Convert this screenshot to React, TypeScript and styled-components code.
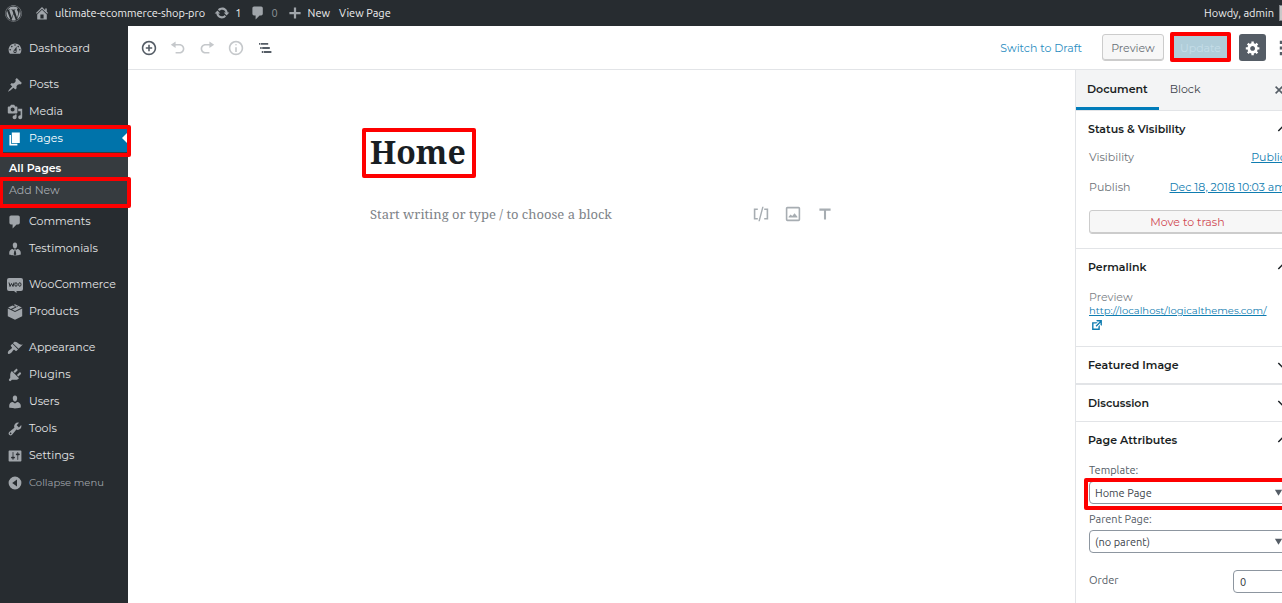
import React from "react";
import styled, { createGlobalStyle, css } from "styled-components";
import { FaWordpress } from "react-icons/fa";

const GlobalStyle = createGlobalStyle`
  *, *::before, *::after { box-sizing: border-box; }
  html, body, #root { height: 100%; }
  body { margin: 0; background: #fff; overflow: hidden; }
  button, input, select { font: inherit; margin: 0; }
`;

const ui = `"Montserrat", "Inter", "Open Sans", sans-serif`;
const system = `"Ubuntu", "Noto Sans", "Open Sans", sans-serif`;
const serif = `"Noto Serif", "DejaVu Serif Condensed", "DejaVu Serif", serif`;

/* ---------- icons ---------- */

const paths = {
  dashboard:
    "M3.76 16h12.48c1.1-1.37 1.76-3.11 1.76-5 0-4.42-3.58-8-8-8s-8 3.58-8 8c0 1.89.66 3.63 1.76 5zM10 4c.55 0 1 .45 1 1s-.45 1-1 1-1-.45-1-1 .45-1 1-1zM6 6c.55 0 1 .45 1 1s-.45 1-1 1-1-.45-1-1 .45-1 1-1zm8 0c.55 0 1 .45 1 1s-.45 1-1 1-1-.45-1-1 .45-1 1-1zm-5.37 5.55L12 7v6c0 1.1-.9 2-2 2s-2-.9-2-2c0-.57.24-1.08.63-1.45zM4 10c.55 0 1 .45 1 1s-.45 1-1 1-1-.45-1-1 .45-1 1-1zm12 0c.55 0 1 .45 1 1s-.45 1-1 1-1-.45-1-1 .45-1 1-1zm-5 3c0-.55-.45-1-1-1s-1 .45-1 1 .45 1 1 1 1-.45 1-1z",
  pin: "M10.44 3.02l1.82-1.82 6.36 6.35-1.83 1.82c-1.05-.68-2.48-.57-3.41.36l-.75.75c-.92.93-1.04 2.35-.35 3.41l-1.83 1.82-2.41-2.41-2.8 2.79c-.42.42-3.38 2.71-3.8 2.29s1.86-3.39 2.28-3.81l2.79-2.79L4.1 9.36l1.83-1.82c1.05.69 2.48.57 3.4-.36l.75-.75c.93-.92 1.05-2.35.36-3.41z",
  media:
    "M13 11V4c0-.55-.45-1-1-1h-1.67L9 1H5L3.67 3H2c-.55 0-1 .45-1 1v7c0 .55.45 1 1 1h10c.55 0 1-.45 1-1zM7 4.5c1.38 0 2.5 1.12 2.5 2.5S8.38 9.5 7 9.5 4.5 8.38 4.5 7 5.62 4.5 7 4.5zM14 6h5v10.5c0 1.38-1.12 2.5-2.5 2.5S14 17.88 14 16.5s1.12-2.5 2.5-2.5c.17 0 .34.02.5.05V9h-3V6zm-4 8.05V13h2v3.5c0 1.38-1.12 2.5-2.5 2.5S7 17.88 7 16.5 8.12 14 9.5 14c.17 0 .34.02.5.05z",
  page: "M6 15V2h10v13H6zm-1 1h8v2H3V5h2v11z",
  comment:
    "M5 2h9c1.1 0 2 .9 2 2v7c0 1.1-.9 2-2 2h-2l-5 5v-5H5c-1.1 0-2-.9-2-2V4c0-1.1.9-2 2-2z",
  businessman:
    "M10 9.25c-2.27 0-2.73-3.44-2.73-3.44C7 4.02 7.82 2 9.97 2c2.16 0 2.98 2.02 2.71 3.81 0 0-.41 3.44-2.68 3.44zM7.2 10L9.3 12l-.9 4.6L10 18l1.6-1.4-.9-4.6L12.8 10c2.4 0 4.4 2.3 4.4 4.5V17s-3.6 1.2-7.2 1.2S2.8 17 2.8 17v-2.5C2.8 12.3 4.7 10 7.2 10zM9.2 10.2h1.6l.5 1-1.3 1-1.3-1z",
  users:
    "M10 9.25c-2.27 0-2.73-3.44-2.73-3.44C7 4.02 7.82 2 9.97 2c2.16 0 2.98 2.02 2.71 3.81 0 0-.41 3.44-2.68 3.44zm0 2.57L12.72 10c2.39 0 4.52 2.33 4.52 4.53v2.49s-3.65 1.13-7.24 1.13c-3.65 0-7.24-1.13-7.24-1.13v-2.49c0-2.25 1.94-4.48 4.47-4.48z",
  products:
    "M8.200 1.100L10 .3l8.600 4.200L10 8.600 6.300 6.800 14 3.200 12.700 2.500 4.800 6.100 1.400 4.500 6.800 1.800l5 2.300 1.500-.7zM1 5.600l9 4.300 9-4.300v9.700L10 19.800 1 15.300z",
  appearance:
    "M14.48 11.06L7.41 3.99l1.5-1.5c.5-.56 2.3-.47 3.51.32 1.21.8 1.43 1.28 2.91 2.1 1.18.64 2.45 1.26 4.45.85zm-.71.71L6.7 4.7 4.93 6.47c-.39.39-.39 1.02 0 1.41l1.06 1.06c.39.39.39 1.03 0 1.42-.6.6-1.43 1.11-2.21 1.69-.35.26-.7.53-1.01.84C1.43 14.23.4 16.08 1.4 17.07c.99 1 2.84-.03 4.18-1.36.31-.31.58-.66.85-1.02.57-.78 1.08-1.61 1.69-2.21.39-.39 1.02-.39 1.41 0l1.06 1.06c.39.39 1.02.39 1.41 0z",
  plugins:
    "M13.11 4.36L9.87 7.6 8 5.73l3.24-3.24c.35-.34 1.05-.2 1.56.32.52.51.66 1.21.31 1.55zm-8 1.77l.91-1.12 9.01 9.01-1.19.84c-.71.71-2.63 1.16-3.82 1.16H6.14L4.9 17.26c-.59.59-1.54.59-2.12 0-.59-.58-.59-1.53 0-2.12l1.24-1.24v-3.88c0-1.13.4-3.19 1.09-3.89zm7.26 3.97l3.24-3.24c.34-.35 1.04-.21 1.55.31.52.51.66 1.21.31 1.55l-3.24 3.25z",
  tools:
    "M16.68 9.77c-1.34 1.34-3.3 1.67-4.95.99l-5.41 6.52c-.99.99-2.59.99-3.58 0s-.99-2.59 0-3.57l6.52-5.42c-.68-1.65-.35-3.61.99-4.95 1.28-1.28 3.12-1.62 4.72-1.06l-2.89 2.89 2.82 2.82 2.86-2.87c.53 1.58.18 3.39-1.08 4.65zM3.81 16.21c.4.39 1.04.39 1.43 0 .4-.4.4-1.04 0-1.43-.39-.4-1.03-.4-1.43 0-.39.39-.39 1.03 0 1.43z",
  settings:
    "M18 16V4c0-.55-.45-1-1-1H3c-.55 0-1 .45-1 1v12c0 .55.45 1 1 1h14c.55 0 1-.45 1-1zM8 11h1c.55 0 1 .45 1 1s-.45 1-1 1H8v1.5c0 .28-.22.5-.5.5s-.5-.22-.5-.5V13H6c-.55 0-1-.45-1-1s.45-1 1-1h1V5.5c0-.28.22-.5.5-.5s.5.22.5.5V11zm5-2h-1c-.55 0-1-.45-1-1s.45-1 1-1h1V5.5c0-.28.22-.5.5-.5s.5.22.5.5V7h1c.55 0 1 .45 1 1s-.45 1-1 1h-1v5.5c0 .28-.22.5-.5.5s-.5-.22-.5-.5V9z",
  collapse:
    "M10 2a8 8 0 1 0 0 16 8 8 0 0 0 0-16zM12.500 5.500v9L6.500 10z",
  home: "M16 8.5l1.53 1.53-1.06 1.06L10 4.6l-6.47 6.49-1.06-1.06L10 2.5l4 4v-2h2v4zm-6-2.46l6 5.99V18H4v-5.97zM12 17v-5H8v5h4z",
  update:
    "M10.2 3.28c3.53 0 6.43 2.61 6.92 6h2.08l-3.5 4-3.5-4h2.32c-.45-1.97-2.21-3.45-4.32-3.45-1.45 0-2.73.71-3.54 1.78L4.95 5.66C6.23 4.2 8.11 3.28 10.2 3.28zm-.4 13.44c-3.52 0-6.43-2.61-6.92-6H.8l3.5-4c1.17 1.33 2.33 2.67 3.5 4H5.48c.45 1.97 2.21 3.45 4.32 3.45 1.45 0 2.73-.71 3.54-1.78l1.71 1.95c-1.28 1.46-3.15 2.38-5.25 2.38z",
  plus: "M17 8.700v2.800h-5.600V17H8.600v-5.500H3V8.700h5.600V3h2.800v5.700z",
  insert:
    "M10 1c-5 0-9 4-9 9s4 9 9 9 9-4 9-9-4-9-9-9zm0 16c-3.9 0-7-3.1-7-7s3.1-7 7-7 7 3.1 7 7-3.1 7-7 7zm1-11H9v3H6v2h3v3h2v-3h3V9h-3V6z",
  undo: "M12 5H7V2L1 6l6 4V7h5c2.2 0 4 1.8 4 4s-1.8 4-4 4H7v2h5c3.3 0 6-2.7 6-6s-2.7-6-6-6z",
  redo: "M8 5h5V2l6 4-6 4V7H8c-2.2 0-4 1.8-4 4s1.8 4 4 4h5v2H8c-3.3 0-6-2.7-6-6s2.7-6 6-6z",
  info: "M9 15h2V9H9v6zm1-10c-.5 0-1 .5-1 1s.5 1 1 1 1-.5 1-1-.5-1-1-1zm0-4c-5 0-9 4-9 9s4 9 9 9 9-4 9-9-4-9-9-9zm0 16c-3.9 0-7-3.1-7-7s3.1-7 7-7 7 3.1 7 7-3.1 7-7 7z",
  outline:
    "M2.500 3.700h1.800V6H2.500zM5 3.700h9V6H5zM4 8.800h1.800v2.400H4zM6.500 8.800H16v2.400H6.500zM6 13.900h1.800v2.400H6zM8.500 13.900H18v2.400H8.500z",
  gear: "M18 12h-2.18c-.17.7-.44 1.35-.81 1.93l1.54 1.54-2.1 2.1-1.54-1.54c-.58.36-1.23.63-1.91.79V19H8v-2.18c-.68-.16-1.33-.43-1.91-.79l-1.54 1.54-2.12-2.12 1.54-1.54c-.36-.58-.63-1.23-.79-1.91H1V9.03h2.17c.16-.7.44-1.35.8-1.94L2.43 5.55l2.1-2.1 1.54 1.54c.58-.37 1.24-.64 1.93-.81V2h3v2.18c.68.16 1.33.43 1.91.79l1.54-1.54 2.12 2.12-1.54 1.54c.36.59.64 1.24.8 1.94H18V12zm-8.5 1.5c1.66 0 3-1.34 3-3s-1.34-3-3-3-3 1.34-3 3 1.34 3 3 3z",
  more: "M6 1h5v4H6zM6 8h5v4H6zM6 15h5v4H6z",
  close:
    "M14.95 6.46L11.41 10l3.54 3.54-1.41 1.41L10 11.42l-3.53 3.53-1.42-1.42L8.58 10 5.05 6.47l1.42-1.42L10 8.58l3.54-3.53z",
  external:
    "M9 3h8v8l-2-1V6.92l-5.6 5.59-1.41-1.41L14.08 5H10zm3 12v-3l2-2v7H3V6h8L9 8H5v7h7z",
  up: "M10 6l-6 6 1.500 1.500L10 9l4.500 4.500L16 12z",
  down: "M10 14L4 8l1.500-1.500L10 11l4.500-4.500L16 8z",
  triangle: "M2 4h16l-8 13z",
  shortcode: "M1 3h5v2H3v10h3v2H1zM19 3h-5v2h3v10h-3v2h5zM11.500 1h1.800L8.500 19H6.700z",
  image:
    "M3 1h14c1.100 0 2 .9 2 2v14c0 1.100-.9 2-2 2H3c-1.100 0-2-.9-2-2V3c0-1.100.9-2 2-2zM3 3v14h14V3zM4.500 14.500v-1l2.500-3 2 2 3-3.500 3.500 4.500v1z",
  type: "M3 3h14v3H11.300V17H8.700V6H3z",
};

type IconName = keyof typeof paths;

const Svg = styled.svg`
  display: block;
  flex: none;
  fill: currentColor;
`;

const Icon = ({ name, size = 16 }: { name: IconName; size?: number }) => (
  <Svg width={size} height={size} viewBox="0 0 20 20" aria-hidden="true">
    <path fillRule="evenodd" d={paths[name]} />
  </Svg>
);

const WooIcon = () => (
  <Svg width={16} height={16} viewBox="0 0 16 16" aria-hidden="true">
    <path d="M2 1h12q2 0 2 2v9q0 2-2 2h-4.500l0 2-2.500-2H2q-2 0-2-2V3q0-2 2-2z" />
    <path
      d="M2 5.500l1 4 1.500-3L6 9.500l1-4"
      fill="none"
      stroke="#272c30"
      strokeWidth="1"
    />
    <ellipse cx="9" cy="7.500" rx="1.200" ry="1.800" fill="none" stroke="#272c30" />
    <ellipse cx="12.800" cy="7.500" rx="1.200" ry="1.800" fill="none" stroke="#272c30" />
  </Svg>
);

/* ---------- page frame ---------- */

const Viewport = styled.div`
  height: 100%;
  overflow: hidden;
`;

/* The page is slightly wider than the window, so its right edge is cut off. */
const Page = styled.div`
  display: flex;
  flex-direction: column;
  width: calc(100% + 18px);
  min-height: 100%;
`;

const Body = styled.div`
  display: flex;
  flex: 1;
`;

const Highlight = styled.span<{ $inset: string }>`
  position: absolute;
  inset: ${(p) => p.$inset};
  border: 4px solid #fe0000;
  border-radius: 2px;
  pointer-events: none;
  z-index: 2;
`;

/* ---------- admin bar ---------- */

const AdminBar = styled.header`
  display: flex;
  align-items: center;
  height: 26px;
  padding: 0 5px;
  gap: 9px;
  background: #272c30;
  color: #eee;
  font: 11px/24px ${system};
`;

const BarLink = styled.a<{ $muted?: boolean; $end?: boolean }>`
  display: flex;
  align-items: center;
  gap: 5px;
  margin-left: ${(p) => (p.$end ? "auto" : 0)};
  color: ${(p) => (p.$muted ? "#8c9196" : "#eee")};
  text-decoration: none;
  white-space: nowrap;
  svg {
    color: #a0a5aa;
  }
`;

const LogoLink = styled(BarLink)`
  margin-right: 3px;
`;

const Avatar = styled.span`
  display: block;
  width: 16px;
  height: 16px;
  border: 1px solid #82878c;
  background: #c8c8c8;
  && svg {
    color: #fff;
  }
`;

/* ---------- admin menu ---------- */

const AdminMenu = styled.nav`
  flex: 0 0 128px;
  padding-top: 9px;
  background: #272c30;
`;

const MenuGroup = styled.ul`
  list-style: none;
  margin: 0 0 9px;
  padding: 0;
`;

const MenuItem = styled.li`
  position: relative;
`;

const menuRow = css`
  display: flex;
  align-items: center;
  gap: 6px;
  width: 100%;
  height: 27px;
  padding: 0 0 0 7px;
  border: 0;
  background: none;
  text-align: left;
  white-space: nowrap;
`;

const MenuLink = styled.a<{ $current?: boolean }>`
  ${menuRow}
  position: relative;
  font: 11px/27px ${ui};
  color: ${(p) => (p.$current ? "#fff" : "#e4e5e6")};
  text-decoration: none;
  background: ${(p) => (p.$current ? "#0073aa" : "none")};
  svg {
    color: ${(p) => (p.$current ? "#fff" : "#a0a5aa")};
  }
  ${(p) =>
    p.$current &&
    css`
      &::after {
        content: "";
        position: absolute;
        right: 0;
        top: 7px;
        border: 6px solid transparent;
        border-right-color: #fff;
        border-left-width: 0;
      }
    `}
`;

const CollapseButton = styled.button`
  ${menuRow}
  font: 10px/27px ${ui};
  color: #a0a5aa;
`;

const SubMenu = styled.ul`
  list-style: none;
  margin: 0;
  padding: 5px 0 7px;
  background: #363b3f;
`;

const SubLink = styled.a<{ $current?: boolean }>`
  display: block;
  padding-left: 9px;
  font: ${(p) => (p.$current ? 600 : 400)} 11px/22px ${ui};
  color: ${(p) => (p.$current ? "#fff" : "#a5aaaf")};
  text-decoration: none;
`;

/* ---------- editor ---------- */

const Editor = styled.div`
  display: flex;
  flex-direction: column;
  flex: 1;
  min-width: 0;
`;

const Toolbar = styled.div`
  display: flex;
  align-items: center;
  justify-content: space-between;
  height: 44px;
  padding: 0 9px 0 13px;
  border-bottom: 1px solid #e2e4e7;
  font: 11px/16px ${ui};
`;

const ToolGroup = styled.div<{ $gap: number }>`
  display: flex;
  align-items: center;
  gap: ${(p) => p.$gap}px;
`;

const ToolButton = styled.button`
  display: grid;
  place-items: center;
  padding: 0;
  border: 0;
  background: none;
  color: #555d66;
  &:disabled {
    color: #c5c8cb;
  }
`;

const DraftButton = styled.button`
  padding: 0;
  margin-right: 11px;
  border: 0;
  background: none;
  color: #2a8dbf;
`;

const PreviewButton = styled.button`
  width: 62px;
  height: 27px;
  padding: 0;
  border: 1px solid #ccc;
  border-radius: 3px;
  background: #f7f7f7;
  box-shadow: inset 0 -1px 0 #ccc;
  color: #6a7076;
`;

const Anchor = styled.div`
  position: relative;
  width: fit-content;
`;

const UpdateButton = styled.button`
  display: block;
  width: 55px;
  height: 24px;
  padding: 0;
  border: 0;
  background: #b0cdd9;
  color: #c5dde8;
`;

const GearButton = styled.button`
  display: grid;
  place-items: center;
  width: 27px;
  height: 27px;
  margin-left: 2px;
  padding: 0;
  border: 0;
  border-radius: 3px;
  background: #555d66;
  color: #fff;
`;

const Workspace = styled.div`
  display: flex;
  flex: 1;
`;

const Canvas = styled.main`
  flex: 1;
  padding: 62px 16px 0;
`;

const Post = styled.div`
  display: flex;
  flex-direction: column;
  gap: 28px;
  max-width: 463px;
  margin: 0 auto;
`;

const TitleInput = styled.input`
  display: block;
  width: 105px;
  height: 42px;
  padding: 0 0 4px;
  border: 0;
  background: none;
  color: #191e23;
  font: 700 32px/38px ${serif};
  outline: 0;
`;

const BlockRow = styled.div`
  display: flex;
  align-items: center;
  justify-content: space-between;
`;

const BlockInput = styled.input`
  flex: 1;
  height: 24px;
  padding: 0;
  border: 0;
  background: none;
  font: 13px/24px ${serif};
  outline: 0;
  &::placeholder {
    color: #7e8388;
    opacity: 1;
  }
`;

const InserterButton = styled(ToolButton)`
  color: #a7adb2;
`;

/* ---------- settings sidebar ---------- */

const Sidebar = styled.aside`
  flex: 0 0 225px;
  border-left: 1px solid #e2e4e7;
  font: 11px/14px ${ui};
  color: #555d66;
`;

const Tabs = styled.div`
  display: flex;
  height: 40px;
  background: #f3f4f5;
`;

const Tab = styled.button<{ $active?: boolean }>`
  padding: 0 11px;
  border: 0;
  border-bottom: 3px solid ${(p) => (p.$active ? "#007cba" : "transparent")};
  background: none;
  color: ${(p) => (p.$active ? "#191e23" : "#3c434a")};
  font-weight: ${(p) => (p.$active ? 600 : 400)};
`;

const CloseButton = styled(ToolButton)`
  margin-left: auto;
  padding-right: 13px;
`;

const Panel = styled.section<{ $line?: number }>`
  border-top: ${(p) => p.$line ?? 1}px solid #e2e4e7;
`;

const PanelTitle = styled.h2`
  margin: 0;
  font-size: 11px;
`;

const PanelToggle = styled.button`
  display: flex;
  align-items: center;
  justify-content: space-between;
  width: 100%;
  height: 36px;
  padding: 0 11px 0 12px;
  border: 0;
  background: none;
  color: #191e23;
  font-weight: 600;
`;

const PanelBody = styled.div<{ $top?: number }>`
  padding: ${(p) => p.$top ?? 0}px 14px 14px 13px;
`;

const Row = styled.div<{ $top?: number }>`
  display: flex;
  align-items: center;
  justify-content: space-between;
  height: 20px;
  margin-top: ${(p) => p.$top ?? 0}px;
  color: #6c7278;
`;

const LinkButton = styled.button`
  padding: 0;
  border: 0;
  background: none;
  color: #0f7cb0;
  text-decoration: underline;
  white-space: nowrap;
`;

const TrashButton = styled.button`
  display: block;
  width: 100%;
  height: 24px;
  margin-top: 13px;
  padding: 0 0 1px;
  border: 1px solid #ccc;
  border-radius: 3px;
  background: #f7f7f7;
  box-shadow: inset 0 -1px 0 #ccc;
  color: #d04852;
`;

const Permalink = styled.a`
  display: block;
  color: #0f7cb0;
  font-size: 10px;
  svg {
    margin-left: 1px;
  }
`;

const Muted = styled.div`
  color: #7c8287;
`;

const Field = styled.div<{ $top?: number }>`
  position: relative;
  display: flex;
  flex-direction: column;
  gap: 4px;
  margin-top: ${(p) => p.$top ?? 0}px;
  font: 11px/14px ${system};
`;

const SelectBox = styled.div`
  position: relative;
  display: grid;
  align-items: center;
  > * {
    grid-area: 1 / 1;
  }
  > svg {
    justify-self: end;
    margin-right: 3px;
    pointer-events: none;
  }
`;

const Select = styled.select`
  width: 100%;
  height: 23px;
  padding: 0 5px;
  appearance: none;
  border: 1px solid #8d96a0;
  border-radius: 4px;
  background: #fff;
  color: #40464d;
`;

const OrderRow = styled.div`
  display: flex;
  justify-content: space-between;
  margin-top: 17px;
  font: 11px/20px ${system};
`;

const OrderInput = styled.input`
  width: 53px;
  height: 23px;
  padding: 0 6px;
  border: 1px solid #8d96a0;
  border-radius: 4px;
  color: #32373c;
`;

/* ---------- composition ---------- */

const Entry = ({ icon, label }: { icon: IconName; label: string }) => (
  <MenuItem>
    <MenuLink href="#">
      <Icon name={icon} />
      {label}
    </MenuLink>
  </MenuItem>
);

const Section = ({
  title,
  open,
  line,
  children,
}: {
  title: string;
  open?: boolean;
  line?: number;
  children?: React.ReactNode;
}) => (
  <Panel $line={line}>
    <PanelTitle>
      <PanelToggle aria-expanded={!!open}>
        {title}
        <Icon name={open ? "up" : "down"} size={14} />
      </PanelToggle>
    </PanelTitle>
    {children}
  </Panel>
);

export default function App() {
  return (
    <Viewport>
      <GlobalStyle />
      <Page>
        <AdminBar>
          <LogoLink href="#" aria-label="About WordPress">
            <FaWordpress size={17} />
          </LogoLink>
          <BarLink href="#">
            <Icon name="home" />
            ultimate-ecommerce-shop-pro
          </BarLink>
          <BarLink href="#">
            <Icon name="update" />1
          </BarLink>
          <BarLink href="#" $muted>
            <Icon name="comment" />0
          </BarLink>
          <BarLink href="#">
            <Icon name="plus" />
            New
          </BarLink>
          <BarLink href="#">View Page</BarLink>
          <BarLink href="#" $end>
            Howdy, admin
            <Avatar>
              <Icon name="users" size={14} />
            </Avatar>
          </BarLink>
        </AdminBar>

        <Body>
          <AdminMenu aria-label="Main menu">
            <MenuGroup>
              <Entry icon="dashboard" label="Dashboard" />
            </MenuGroup>
            <MenuGroup>
              <Entry icon="pin" label="Posts" />
              <Entry icon="media" label="Media" />
              <MenuItem>
                <MenuLink href="#" $current>
                  <Icon name="page" />
                  Pages
                </MenuLink>
                <Highlight $inset="0 -3px -5px -1px" />
              </MenuItem>
              <MenuItem>
                <SubMenu>
                  <MenuItem>
                    <SubLink href="#" $current>
                      All Pages
                    </SubLink>
                  </MenuItem>
                  <MenuItem>
                    <SubLink href="#">Add New</SubLink>
                    <Highlight $inset="-2px -3px -7px -1px" />
                  </MenuItem>
                </SubMenu>
              </MenuItem>
              <Entry icon="comment" label="Comments" />
              <Entry icon="businessman" label="Testimonials" />
            </MenuGroup>
            <MenuGroup>
              <MenuItem>
                <MenuLink href="#">
                  <WooIcon />
                  WooCommerce
                </MenuLink>
              </MenuItem>
              <Entry icon="products" label="Products" />
            </MenuGroup>
            <MenuGroup>
              <Entry icon="appearance" label="Appearance" />
              <Entry icon="plugins" label="Plugins" />
              <Entry icon="users" label="Users" />
              <Entry icon="tools" label="Tools" />
              <Entry icon="settings" label="Settings" />
              <MenuItem>
                <CollapseButton>
                  <Icon name="collapse" />
                  Collapse menu
                </CollapseButton>
              </MenuItem>
            </MenuGroup>
          </AdminMenu>

          <Editor>
            <Toolbar>
              <ToolGroup $gap={13}>
                <ToolButton aria-label="Add block">
                  <Icon name="insert" />
                </ToolButton>
                <ToolButton aria-label="Undo" disabled>
                  <Icon name="undo" />
                </ToolButton>
                <ToolButton aria-label="Redo" disabled>
                  <Icon name="redo" />
                </ToolButton>
                <ToolButton aria-label="Content structure" disabled>
                  <Icon name="info" />
                </ToolButton>
                <ToolButton aria-label="Block navigation">
                  <Icon name="outline" />
                </ToolButton>
              </ToolGroup>
              <ToolGroup $gap={9}>
                <DraftButton>Switch to Draft</DraftButton>
                <PreviewButton>Preview</PreviewButton>
                <Anchor>
                  <UpdateButton>Update</UpdateButton>
                  <Highlight $inset="-4px -3px -2px" />
                </Anchor>
                <GearButton aria-label="Settings">
                  <Icon name="gear" />
                </GearButton>
                <ToolButton aria-label="More tools">
                  <Icon name="more" />
                </ToolButton>
              </ToolGroup>
            </Toolbar>

            <Workspace>
              <Canvas>
                <Post>
                  <Anchor>
                    <TitleInput aria-label="Title" defaultValue="Home" />
                    <Highlight $inset="-4px -1px -4px -8px" />
                  </Anchor>
                  <BlockRow>
                    <BlockInput
                      aria-label="Add block"
                      placeholder="Start writing or type / to choose a block"
                    />
                    <ToolGroup $gap={16}>
                      <InserterButton aria-label="Shortcode">
                        <Icon name="shortcode" />
                      </InserterButton>
                      <InserterButton aria-label="Image">
                        <Icon name="image" />
                      </InserterButton>
                      <InserterButton aria-label="Heading">
                        <Icon name="type" />
                      </InserterButton>
                    </ToolGroup>
                  </BlockRow>
                </Post>
              </Canvas>

              <Sidebar>
                <Tabs>
                  <Tab $active>Document</Tab>
                  <Tab>Block</Tab>
                  <CloseButton aria-label="Close settings">
                    <Icon name="close" />
                  </CloseButton>
                </Tabs>

                <Section title="Status & Visibility" open>
                  <PanelBody>
                    <Row>
                      Visibility <LinkButton>Public</LinkButton>
                    </Row>
                    <Row $top={10}>
                      Publish <LinkButton>Dec 18, 2018 10:03 am</LinkButton>
                    </Row>
                    <TrashButton>Move to trash</TrashButton>
                  </PanelBody>
                </Section>

                <Section title="Permalink" open>
                  <PanelBody $top={5}>
                    <Muted>Preview</Muted>
                    <Permalink href="#">
                      http://localhost/logicalthemes.com/
                      <Icon name="external" size={14} />
                    </Permalink>
                  </PanelBody>
                </Section>

                <Section title="Featured Image" />
                <Section title="Discussion" line={2} />

                <Section title="Page Attributes" open>
                  <PanelBody $top={5}>
                    <Field>
                      <label htmlFor="template">Template:</label>
                      <SelectBox>
                        <Select id="template">
                          <option>Home Page</option>
                        </Select>
                        <Icon name="triangle" size={9} />
                        <Highlight $inset="-3px -5px -6px -5px" />
                      </SelectBox>
                    </Field>
                    <Field $top={8}>
                      <label htmlFor="parent">Parent Page:</label>
                      <SelectBox>
                        <Select id="parent">
                          <option>(no parent)</option>
                        </Select>
                        <Icon name="triangle" size={9} />
                      </SelectBox>
                    </Field>
                    <OrderRow>
                      <label htmlFor="order">Order</label>
                      <OrderInput id="order" defaultValue="0" />
                    </OrderRow>
                  </PanelBody>
                </Section>
              </Sidebar>
            </Workspace>
          </Editor>
        </Body>
      </Page>
    </Viewport>
  );
}
